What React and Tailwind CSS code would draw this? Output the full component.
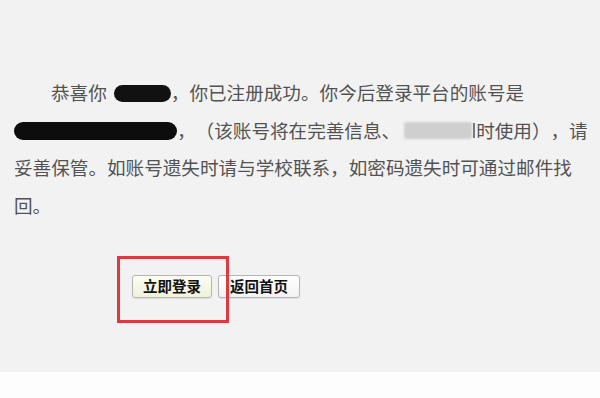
export default function App() {
  const font = { fontFamily: '"Noto Sans CJK SC", "Noto Sans", sans-serif' };
  return (
    <div className="w-[600px] h-[398px] bg-[#fdfdfd] overflow-hidden" style={font}>
      <div className="relative h-[372px] bg-[#f2f2f2]">
        <p className="pl-[14px] pt-[73px] w-[592px] text-[18.6px] leading-[37.5px] text-[#525252] whitespace-nowrap [text-spacing-trim:space-all]">
          <span className="pl-[37px]">恭喜你</span>
          <span className="inline-block align-middle ml-[7px] w-[57px] h-[17px] rounded-full bg-[#111] -mt-[3px]"></span>
          <span>，你已注册成功。你今后登录平台的账号是</span>
          <br />
          <span className="inline-block align-middle w-[163px] h-[18px] rounded-full bg-[#0d0d0d] -mt-[3px]"></span>
          <span>，（该账号将在完善信息、</span>
          <span className="inline-block align-middle relative w-[76px] h-[18px] -mt-[3px]">
            <span className="absolute left-[4px] top-0 w-[68px] h-[17px] rounded-[3px] bg-[#cfcfcf] blur-[1px]"></span>
            <span className="absolute left-[73px] top-[1px] w-[2px] h-[15px] bg-[#777]"></span>
          </span>
          <span>时使用），请</span>
          <br />
          <span>妥善保管。如账号遗失时请与学校联系，如密码遗失时可通过邮件找</span>
          <br />
          <span>回。</span>
        </p>
        <div className="flex gap-[6px] ml-[132px] mt-[52px]">
          <button className="w-[80px] h-[23px] rounded-[3px] border border-[#b5b5b5] bg-gradient-to-b from-[#fdfdf2] to-[#f1f1dc] text-[14.5px] font-bold text-[#111] leading-none shadow-[0_1px_1px_rgba(0,0,0,0.08)]">
            立即登录
          </button>
          <button className="w-[82px] h-[23px] rounded-[3px] border border-[#b5b5b5] bg-gradient-to-b from-[#ffffff] to-[#f2f2f2] text-[14.5px] font-bold text-[#111] leading-none shadow-[0_1px_1px_rgba(0,0,0,0.08)]">
            返回首页
          </button>
        </div>
        <div className="absolute left-[117px] top-[256px] w-[112px] h-[67px] border-[3px] border-[#db3a40]"></div>
      </div>
    </div>
  );
}
